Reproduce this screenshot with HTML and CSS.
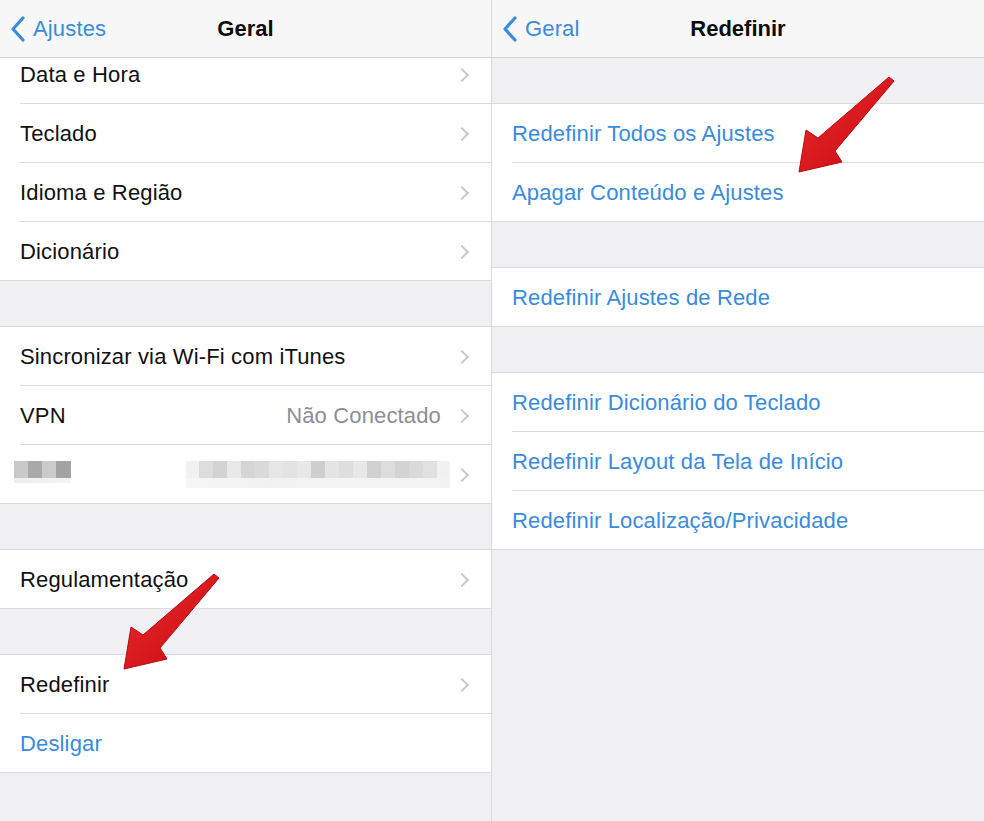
FILE: index.html
```html
<!DOCTYPE html>
<html lang="pt-BR">
<head>
    <meta charset="UTF-8">
    <meta name="viewport" content="width=device-width, initial-scale=1.0">
    <title>Geral | Redefinir</title>
    <link rel="stylesheet" href="styles.css">
</head>
<body>
    <div class="screen">
        <!-- painel esquerdo: Geral -->
        <section class="pane pane-left">
            <header class="navbar">
                <a class="back" href="#">
                    <svg class="back-icon" width="16" height="26" viewBox="0 0 16 26"><path d="M13 2 L3 13 L13 24" /></svg>
                    Ajustes
                </a>
                <h1>Geral</h1>
            </header>

            <div class="group group-top">
                <div class="row row-clipped"><span>Data e Hora</span><i class="chev"></i></div>
                <div class="row"><span>Teclado</span><i class="chev"></i></div>
                <div class="row"><span>Idioma e Região</span><i class="chev"></i></div>
                <div class="row"><span>Dicionário</span><i class="chev"></i></div>
            </div>

            <div class="group">
                <div class="row"><span>Sincronizar via Wi-Fi com iTunes</span><i class="chev"></i></div>
                <div class="row"><span>VPN</span><span class="detail">Não Conectado</span><i class="chev"></i></div>
                <div class="row"><span class="blur blur-name"></span><span class="blur blur-value"></span><i class="chev"></i></div>
            </div>

            <div class="group">
                <div class="row"><span>Regulamentação</span><i class="chev"></i></div>
            </div>

            <div class="group">
                <div class="row"><span>Redefinir</span><i class="chev"></i></div>
                <div class="row action"><span>Desligar</span></div>
            </div>
        </section>

        <!-- painel direito: Redefinir -->
        <section class="pane">
            <header class="navbar">
                <a class="back" href="#">
                    <svg class="back-icon" width="16" height="26" viewBox="0 0 16 26"><path d="M13 2 L3 13 L13 24" /></svg>
                    Geral
                </a>
                <h1>Redefinir</h1>
            </header>

            <div class="group">
                <div class="row action"><span>Redefinir Todos os Ajustes</span></div>
                <div class="row action"><span>Apagar Conteúdo e Ajustes</span></div>
            </div>

            <div class="group">
                <div class="row action"><span>Redefinir Ajustes de Rede</span></div>
            </div>

            <div class="group">
                <div class="row action"><span>Redefinir Dicionário do Teclado</span></div>
                <div class="row action"><span>Redefinir Layout da Tela de Início</span></div>
                <div class="row action"><span>Redefinir Localização/Privacidade</span></div>
            </div>
        </section>

        <!-- setas vermelhas por cima da captura -->
        <svg class="arrows" width="984" height="821" viewBox="0 0 984 821">
            <defs>
                <linearGradient id="red" x1="0" y1="0" x2="1" y2="1">
                    <stop offset="0" stop-color="#ea2a2e" />
                    <stop offset="1" stop-color="#c80a10" />
                </linearGradient>
                <polygon id="arrow" points="214,574 219,578 160,648 167,659 124,669 131,627 143,635" />
            </defs>
            <use href="#arrow" class="arrow" />
            <use href="#arrow" class="arrow" transform="translate(675,-497)" />
        </svg>
    </div>
</body>
</html>
```

FILE: styles.css
```css
* {
    box-sizing: border-box;
    margin: 0;
    padding: 0;
}

body {
    font-family: 'Liberation Sans', Arial, sans-serif;
    background-color: #efeff4;
    color: #111;
}

.screen {
    position: relative;
    display: grid;
    grid-template-columns: 492px 492px;
    width: 984px;
    height: 821px;
    overflow: hidden;
}

.pane {
    background-color: #efeff4;
    overflow: hidden;
}

.pane-left {
    border-right: 1px solid #d9d9dd;
}

.navbar {
    position: relative;
    height: 58px;
    background-color: #f7f7f7;
    border-bottom: 1px solid #d2d2d6;
    display: flex;
    align-items: center;
    justify-content: center;
    padding-top: 1px;
}

.navbar h1 {
    font-size: 22px;
    font-weight: bold;
    color: #0c0c0c;
}

.back {
    position: absolute;
    left: 10px;
    top: 16px;
    display: flex;
    align-items: center;
    gap: 7px;
    color: #3a8bdc;
    text-decoration: none;
    font-size: 22px;
    letter-spacing: 0.15px;
}

.back-icon path {
    fill: none;
    stroke: #3a8bdc;
    stroke-width: 3.2;
    stroke-linecap: round;
    stroke-linejoin: round;
}

.group {
    background-color: #fff;
    border-top: 1px solid #dcdce0;
    border-bottom: 1px solid #dcdce0;
    margin-top: 45px;
}

.group-top {
    margin-top: 0;
    border-top: none;
}

.row {
    position: relative;
    height: 58px;
    display: flex;
    align-items: center;
    padding: 0 20px;
    font-size: 22px;
    letter-spacing: 0.15px;
    padding-top: 1px;
}

.row + .row {
    height: 59px;
    border-top: 1px solid #dcdce0;
    margin-left: 20px;
    padding-left: 0;
}

.row-clipped {
    height: 45px;
    padding-bottom: 13px;
}

.row > span:first-child {
    flex: 1;
}

.action {
    color: #3a8bdc;
}

.detail {
    color: #8e8e93;
    margin-right: 16px;
}

.chev {
    width: 10px;
    height: 10px;
    border-right: 2px solid #c7c7cc;
    border-top: 2px solid #c7c7cc;
    transform: rotate(45deg);
    margin-right: 4px;
}

/* linha pixelizada */
.blur {
    height: 27px;
}

.row > span.blur-name {
    flex: none;
    width: 57px;
    margin-left: -6px;
    background:
        linear-gradient(to right, #c9c9c9 0 14px, #a9a9a9 14px 28px, #cbcbcb 28px 42px, #a3a3a3 42px 56px) top / 100% 17px no-repeat,
        linear-gradient(to right, #eeeeee, #f3f3f3) 0 17px / 100% 5px no-repeat;
}

.blur-value {
    flex: none;
    width: 264px;
    margin-right: 7px;
    margin-left: auto;
    background:
        linear-gradient(to right,
            #f1f1f1 0 13px, #dcdcdc 13px 27px, #d3d3d3 27px 41px, #e8e8e8 41px 55px,
            #d5d5d5 55px 69px, #dadada 69px 83px, #e6e6e6 83px 97px, #e3e3e3 97px 111px,
            #e8e8e8 111px 125px, #cecece 125px 139px, #e4e4e4 139px 153px, #dedede 153px 167px,
            #e8e8e8 167px 181px, #d1d1d1 181px 195px, #dcdcdc 195px 209px, #d3d3d3 209px 223px,
            #dadada 223px 237px, #e1e1e1 237px 251px, #f1f1f1 251px 264px) top / 100% 17px no-repeat,
        linear-gradient(to right, #f6f6f6, #f1f1f1 30%, #f4f4f4 60%, #f2f2f2) 0 17px / 100% 10px no-repeat;
}

.arrows {
    position: absolute;
    top: 0;
    left: 0;
    pointer-events: none;
}

.arrow {
    fill: url(#red);
    stroke: #b80a10;
    stroke-width: 1;
    stroke-linejoin: round;
}
```
